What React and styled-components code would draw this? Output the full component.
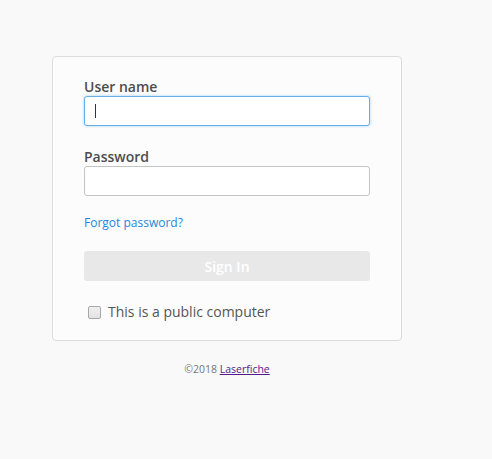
import React from "react";
import styled, { createGlobalStyle } from "styled-components";

const Global = createGlobalStyle`
  html, body { margin: 0; padding: 0; background: #f9f9f9; }
  body { font-family: "Open Sans", "Liberation Sans", sans-serif; }
`;

const Page = styled.div`
  padding-top: 56px;
  padding-left: 52px;
  width: 350px;
`;

const Card = styled.form`
  box-sizing: border-box;
  width: 350px;
  background: #fcfcfc;
  border: 1px solid #dcdcdc;
  border-radius: 4px;
  padding: 20px 31px 18px;
  display: flex;
  flex-direction: column;
`;

const Label = styled.label`
  display: block;
  font-size: 14px;
  line-height: 19px;
  font-weight: 600;
  color: #4d4d4d;
  margin-top: ${(p) => p.$top || 0}px;
`;

const InputWrap = styled.div`
  position: relative;
`;

const Input = styled.input`
  box-sizing: border-box;
  display: block;
  width: 100%;
  height: 30px;
  padding: 0 10px;
  border: 1px solid ${(p) => (p.$focused ? "#66afe9" : "#c4c4c4")};
  box-shadow: ${(p) => (p.$focused ? "0 0 3px rgba(102,175,233,0.6)" : "none")};
  border-radius: 3px;
  background: #fff;
  font-family: inherit;
  font-size: 14px;
  outline: none;
`;

const Caret = styled.span`
  position: absolute;
  left: 11px;
  top: 8px;
  width: 1px;
  height: 14px;
  background: #333;
`;

const Forgot = styled.a`
  display: block;
  margin-top: 18px;
  font-size: 12px;
  line-height: 17px;
  color: #1f87d8;
  text-decoration: none;
  align-self: flex-start;
`;

const SignIn = styled.button`
  margin-top: 20px;
  height: 30px;
  border: none;
  border-radius: 3px;
  background: #e8e8e8;
  color: #ffffff;
  font-family: inherit;
  font-size: 14px;
  font-weight: 600;
  padding: 0;
`;

const CheckRow = styled.label`
  display: flex;
  align-items: center;
  margin-top: 21px;
  padding-left: 4px;
  gap: 7px;
  font-size: 14px;
  line-height: 20px;
  color: #555;
`;

const Box = styled.input`
  appearance: none;
  margin: 0;
  width: 13px;
  height: 13px;
  border: 1px solid #a8a8a8;
  border-radius: 2px;
  background: linear-gradient(#f0f0f0, #e2e2e2);
  box-sizing: border-box;
`;

const Footer = styled.div`
  margin-top: 21px;
  text-align: center;
  font-size: 10.5px;
  line-height: 15px;
  color: #777;
`;

const FooterLink = styled.a`
  color: #551a8b;
  text-decoration: underline;
`;

export default function App() {
  return (
    <>
      <Global />
      <Page>
        <Card onSubmit={(e) => e.preventDefault()}>
          <Label htmlFor="user">User name</Label>
          <InputWrap>
            <Input id="user" type="text" $focused />
            <Caret />
          </InputWrap>
          <Label htmlFor="pass" $top={21}>Password</Label>
          <Input id="pass" type="password" />
          <Forgot href="#">Forgot password?</Forgot>
          <SignIn type="submit">Sign In</SignIn>
          <CheckRow>
            <Box type="checkbox" />
            This is a public computer
          </CheckRow>
        </Card>
        <Footer>
          ©2018 <FooterLink href="#">Laserfiche</FooterLink>
        </Footer>
      </Page>
    </>
  );
}
